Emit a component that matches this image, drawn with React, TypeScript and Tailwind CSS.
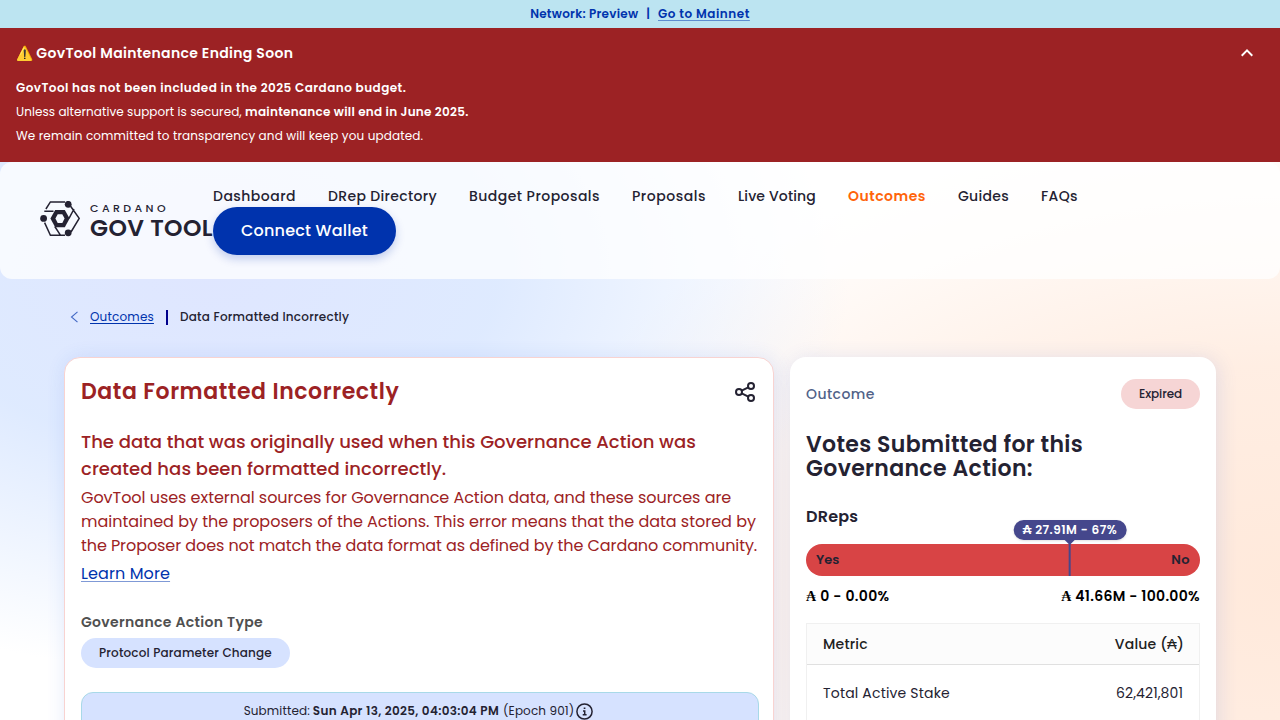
import type { ReactNode } from "react";

const navItems = [
  { label: "Dashboard", tracking: "tracking-[0.47px]" },
  { label: "DRep Directory", tracking: "tracking-[0.34px]" },
  { label: "Budget Proposals", tracking: "tracking-[0.46px]" },
  { label: "Proposals", tracking: "tracking-[0.53px]" },
  { label: "Live Voting", tracking: "tracking-[0.15px]" },
  { label: "Outcomes", tracking: "tracking-[0.5px]" },
  { label: "Guides", tracking: "tracking-[0.3px]" },
  { label: "FAQs", tracking: "tracking-[0.37px]" },
];

function NetworkBar() {
  return (
    <div className="flex h-7 items-center justify-center bg-[#bce4f1] text-xs font-semibold text-[#0033ad]">
      <span className="tracking-[0.25px]">Network: Preview</span>
      <span className="mx-2">|</span>
      <a className="tracking-[0.52px] underline decoration-[#0033ad]/50 underline-offset-2">Go to Mainnet</a>
    </div>
  );
}

function MaintenanceBanner() {
  return (
    <section className="flex h-[134px] justify-between bg-[#9c2224] px-4 pt-[15px] text-white">
      <div>
        <h2 className="text-sm leading-[21px] font-semibold">
          ⚠️ <span className="tracking-[0.33px]">GovTool Maintenance Ending Soon</span>
        </h2>
        <div className="mt-3 text-xs leading-6">
          <p className="font-semibold tracking-[0.45px]">GovTool has not been included in the 2025 Cardano budget.</p>
          <p className="tracking-[0.07px]">
            Unless alternative support is secured,{" "}
            <strong className="font-semibold tracking-[0.27px]">maintenance will end in June 2025.</strong>
          </p>
          <p className="tracking-[0.13px]">We remain committed to transparency and will keep you updated.</p>
        </div>
      </div>
      <svg className="-mt-0.5 mr-[5px] size-6" viewBox="0 0 24 24" fill="currentColor">
        <path d="M12 8l-6 6 1.41 1.41L12 10.83l4.59 4.58L18 14z" />
      </svg>
    </section>
  );
}

function Logo() {
  return (
    <div className="flex h-[39px] w-[173px] shrink-0 items-start gap-[10px] text-[#242232]">
      <svg className="h-9 w-10 shrink-0" viewBox="0 0 40 36" fill="none" stroke="currentColor" strokeWidth="1.5">
        <path d="M5.9 8L10.4 0.9H25M4.3 10.2H13.5M4.6 21.6L10.4 34.3H25M30.6 5.2L39.2 17.4L31 31M34 8L29 17.4M14.8 25.5L20.4 34.2" />
        <path d="M15.2 9H24.8L29.6 17.6L24.8 26.2H15.2L10.4 17.6Z" fill="currentColor" stroke="none" />
        <path d="M17.7 13.2H22.3L24.6 17.6L22.3 22H17.7L15.4 17.6Z" fill="#f6f9ff" stroke="none" />
        <circle cx="28.2" cy="3.3" r="3.4" fill="currentColor" stroke="none" />
        <circle cx="3.6" cy="17.4" r="3.4" fill="currentColor" stroke="none" />
        <circle cx="28.2" cy="31.8" r="3.4" fill="currentColor" stroke="none" />
      </svg>
      <div className="whitespace-nowrap">
        <div className="text-[11px] leading-[14px] font-medium tracking-[3.4px]">CARDANO</div>
        <div className="mt-px text-[23.5px] leading-6 font-semibold tracking-[0.35px]">GOV TOOL</div>
      </div>
    </div>
  );
}

function Header() {
  return (
    <header className="flex h-[117px] items-center rounded-xl bg-white/75 px-10">
      <Logo />
      <div className="relative flex flex-col items-start">
        <nav className="flex h-[21px] items-center gap-8 pb-0.5 text-sm">
          {navItems.map(({ label, tracking }) => (
            <a
              key={label}
              className={`${tracking} ${label === "Outcomes" ? "font-semibold text-[#ff640a]" : "font-medium text-[#242232]"}`}
            >
              {label}
            </a>
          ))}
        </nav>
        <button className="h-12 rounded-full bg-[#0033ad] px-7 text-base font-medium tracking-[0.21px] text-white shadow-[0_4px_10px_rgba(0,51,173,0.22)]">
          Connect Wallet
        </button>
      </div>
    </header>
  );
}

function Breadcrumbs() {
  return (
    <div className="flex h-[18px] items-center text-xs">
      <svg className="mr-[11px] ml-[6px] h-3 w-[9px]" viewBox="0 0 9 12" fill="none" stroke="#0033ad" strokeWidth="1.1">
        <path d="M7.5 0.8L1.5 6L7.5 11.2" opacity="0.7" />
      </svg>
      <a className="tracking-[0.18px] text-[#0033ad] underline underline-offset-2">Outcomes</a>
      <span className="mx-3 h-[15px] w-0.5 bg-[#00008b]" />
      <span className="font-medium tracking-[0.23px] text-[#242232]">Data Formatted Incorrectly</span>
    </div>
  );
}

function Pill({ className, children }: { className: string; children: ReactNode }) {
  return (
    <span
      className={`flex h-[30px] w-fit items-center rounded-full px-[18px] text-xs font-medium text-[#242232] ${className}`}
    >
      {children}
    </span>
  );
}

function ActionCard() {
  return (
    <article className="w-[710px] rounded-2xl border border-[#f8d3d1] bg-white pt-[17px] pr-[14px] pl-4 shadow-[2px_2px_20px_rgba(47,98,220,0.14)]">
      <div className="flex items-center justify-between pr-[3px]">
        <h1 className="text-[22px] leading-[34px] font-semibold tracking-[0.58px] text-[#9c2224]">
          Data Formatted Incorrectly
        </h1>
        <svg className="-mt-px size-[22px]" viewBox="0 0 22 22" fill="none" stroke="#242232" strokeWidth="2">
          <circle cx="17" cy="5" r="3" />
          <circle cx="5" cy="11" r="3" />
          <circle cx="17" cy="17" r="3" />
          <path d="M7.7 9.6L14.3 6.4M7.7 12.4L14.3 15.6" />
        </svg>
      </div>
      <div className="mt-[19px] text-[#9c2224]">
        <h2 className="text-lg leading-[27px] font-medium tracking-[0.02px]">
          The data that was originally used when this Governance Action was
          <br />
          <span className="tracking-[0.08px]">created has been formatted incorrectly.</span>
        </h2>
        <p className="mt-1 text-base leading-6 whitespace-nowrap">
          <span className="tracking-[-0.04px]">
            GovTool uses external sources for Governance Action data, and these sources are
          </span>
          <br />
          <span className="tracking-[-0.015px]">
            maintained by the proposers of the Actions. This error means that the data stored by
          </span>
          <br />
          <span className="tracking-[-0.08px]">
            the Proposer does not match the data format as defined by the Cardano community.
          </span>
        </p>
        <a className="mt-1 block w-fit text-base leading-6 tracking-[0.1px] text-[#0033ad] underline decoration-[#0033ad]/50 underline-offset-2">
          Learn More
        </a>
      </div>
      <h3 className="mt-6 text-sm leading-6 font-semibold tracking-[0.33px] text-[#505050]">Governance Action Type</h3>
      <Pill className="mt-1 bg-[#d6e2ff] tracking-[0.17px]">Protocol Parameter Change</Pill>
      <div className="mt-6 h-20 rounded-xl border border-[#a8d9e8] bg-[#d6e2ff] pt-[9px]">
        <div className="flex items-center justify-center pr-[3px] text-xs leading-[18px] text-[#242232]">
          <span className="tracking-[0.12px]">Submitted:</span>
          <span className="ml-[3px] font-semibold tracking-[0.33px]">Sun Apr 13, 2025, 04:03:04 PM</span>
          <span className="ml-1 tracking-[0.12px]">(Epoch 901)</span>
          <svg className="ml-0.5 size-[17px]" viewBox="0 0 17 17" fill="none" stroke="#242232" strokeWidth="1.5">
            <circle cx="8.5" cy="8.5" r="7.6" />
            <path d="M7 8H8.7V11.7M6.7 11.8H10.6M7.7 5.2H9.4" />
          </svg>
        </div>
      </div>
    </article>
  );
}

function VoteBar() {
  return (
    <div className="relative mt-[15px]">
      <div className="flex h-8 items-center justify-between rounded-full bg-[#d84445] px-[10px] text-[13px] font-semibold text-[#242232]">
        <span>Yes</span>
        <span className="tracking-[0.4px]">No</span>
      </div>
      {/* Approval threshold marker */}
      <div className="absolute -top-6 left-[67%] flex -translate-x-1/2 flex-col items-center">
        <span className="flex h-5 items-center rounded-full bg-[#45478c] px-[9px] text-xs font-semibold tracking-[0.5px] whitespace-nowrap text-white shadow-sm">
          ₳ 27.91M - 67%
        </span>
        <span className="h-0 w-0 border-x-[5px] border-t-[5px] border-x-transparent border-t-[#45478c]" />
        <span className="-mt-px h-8 w-0.5 bg-[#45478c]" />
      </div>
    </div>
  );
}

function VotesCard() {
  return (
    <aside className="w-[426px] rounded-2xl bg-white px-4 pt-[22px] text-[#242232] shadow-[2px_2px_20px_rgba(47,98,220,0.14)]">
      <div className="flex items-center justify-between">
        <span className="text-sm font-medium tracking-[0.45px] text-[#506288]">Outcome</span>
        <Pill className="bg-[#f6d5d5] tracking-[-0.1px]">Expired</Pill>
      </div>
      <h2 className="mt-6 text-[22px] leading-6 font-semibold tracking-[0.35px]">
        Votes Submitted for this
        <br />
        Governance Action:
      </h2>
      <h3 className="mt-6 text-base leading-6 font-semibold tracking-[0.2px]">DReps</h3>
      <VoteBar />
      <div className="mt-[10px] flex justify-between font-['Poppins',serif] text-sm leading-[21px] font-semibold tracking-[0.35px] text-black">
        <span>₳ 0 - 0.00%</span>
        <span className="tracking-[0.31px]">₳ 41.66M - 100.00%</span>
      </div>
      <div className="mt-4 h-28 border border-[#f0f0f0] text-sm">
        <div className="flex h-[41px] items-center justify-between border-b border-[#e0e0e0] bg-[#fcfcfc] px-4 font-medium tracking-[0.2px] text-[#212121]">
          <span>Metric</span>
          <span className="-mr-px">Value (₳)</span>
        </div>
        <div className="flex h-14 items-center justify-between px-4">
          <span className="tracking-[0.18px]">Total Active Stake</span>
          <span className="tracking-[0.1px]">62,421,801</span>
        </div>
      </div>
    </aside>
  );
}

export default function App() {
  return (
    <div className="h-[720px] overflow-hidden bg-white font-['Poppins','Liberation_Sans',sans-serif]">
      <NetworkBar />
      <MaintenanceBanner />
      <div className="h-[558px] bg-[radial-gradient(ellipse_640px_400px_at_210px_110px,#dfe6ff_0%,rgba(219,232,255,0.9)_45%,rgba(219,232,255,0)_100%),radial-gradient(ellipse_780px_480px_at_1290px_420px,#ffe9db_0%,rgba(255,236,224,0.9)_45%,rgba(255,236,224,0)_100%)]">
        <Header />
        <main className="px-16 pt-[29px]">
          <Breadcrumbs />
          <div className="mt-[31px] flex h-[420px] gap-4">
            <ActionCard />
            <VotesCard />
          </div>
        </main>
      </div>
    </div>
  );
}
